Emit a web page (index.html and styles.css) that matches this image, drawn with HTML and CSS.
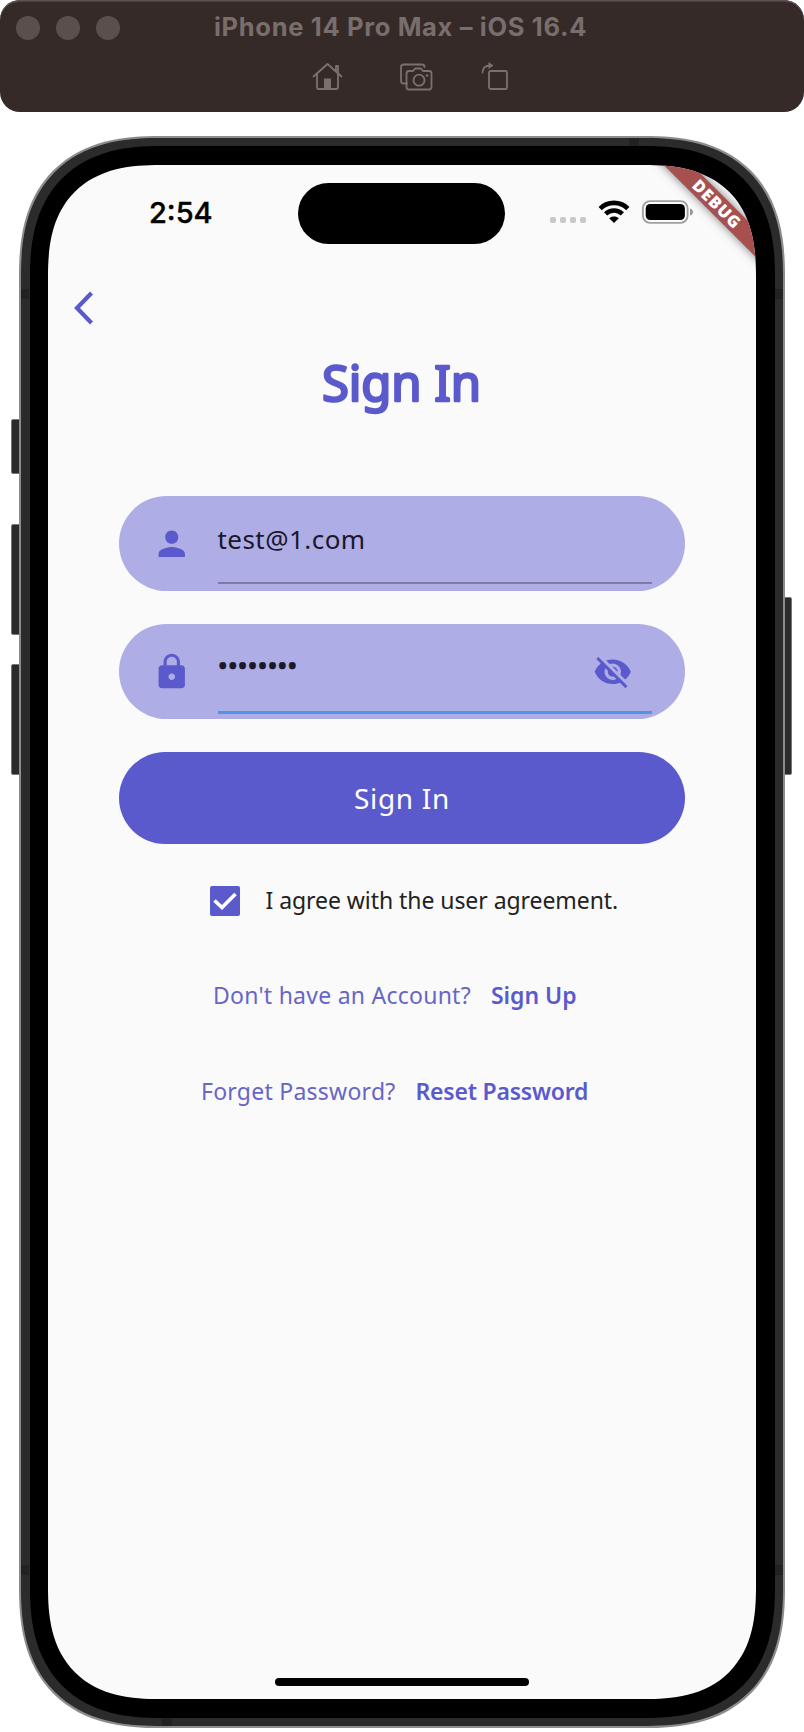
FILE: index.html
```html
<!DOCTYPE html>
<html lang="en">
<head>
<meta charset="utf-8">
<title>Sign In</title>
<link rel="stylesheet" href="styles.css">
</head>
<body>
<header class="titlebar">
  <div class="title-row">
    <div class="lights"><span class="light"></span><span class="light"></span><span class="light"></span></div>
    <div class="device-name"><span>iPhone 14 Pro Max – iOS 16.4</span></div>
  </div>
  <div class="tools">
    <svg class="tool" width="32" height="30" viewBox="0 0 32 30">
      <path d="M1.5 14.5 15.5 2 29.5 14.5M5 12V25q0 2 2 2H24q2 0 2-2V12M24 9V4h2v7"/>
      <path class="solid" d="M12 16.500h7V27h-7z"/>
    </svg>
    <svg class="tool" width="34" height="30" viewBox="0 0 34 30">
      <path d="M7 21.500H3.500q-2.500 0-2.500-2.500V5q0-2.500 2.500-2.500H22q2.500 0 2.500 2.500"/>
      <path d="M9 9h4l2-2.500h6L23 9h6q2.500 0 2.500 2.500V25q0 2.500-2.500 2.500H9Q6.500 27.500 6.500 25V11.500Q6.500 9 9 9Z"/>
      <circle cx="19" cy="18.200" r="5.500"/><circle class="solid" cx="27" cy="13.500" r="1.300"/>
    </svg>
    <svg class="tool" width="28" height="30" viewBox="0 0 28 30">
      <rect x="8" y="9" width="18" height="18" rx="2"/>
      <path d="M1.500 10.500C1.500 6 4 3.500 9.500 3.500"/><path class="solid" d="M7.500 0 12.500 3.500 7.500 7z"/>
    </svg>
  </div>
</header>

<main class="device">
  <i class="key key-mute"></i><i class="key key-up"></i><i class="key key-down"></i><i class="key key-power"></i>
  <div class="frame">
    <i class="band band-top"></i><i class="band band-left"></i><i class="band band-right"></i>
    <i class="band band-left low"></i><i class="band band-right low"></i><i class="band band-bottom"></i>
    <div class="bezel">
      <div class="screen">
        <div class="status">
          <span class="time">2:54</span>
          <span class="island"></span>
          <div class="indicators">
            <span class="cell"><i></i><i></i><i></i><i></i></span>
            <svg class="wifi" width="32" height="24" viewBox="0 0 32 24">
              <path d="M2.200 8.600C9.800 1 22.200 1 29.800 8.600M7.600 13.900C12.400 9.300 19.600 9.300 24.400 13.900"/>
              <path class="wedge" d="M16 23 11.200 18.300C13.800 15.900 18.200 15.900 20.800 18.300Z"/>
            </svg>
            <svg class="battery" width="52" height="24" viewBox="0 0 52 24">
              <rect class="shell" x=".9" y="1.200" width="44.700" height="21.600" rx="7"/>
              <rect x="3.700" y="4" width="39.200" height="16" rx="4.500"/>
              <path class="nub" d="M48 8.500Q51 9.500 51 12T48 15.500Z"/>
            </svg>
          </div>
          <div class="ribbon"><span>DEBUG</span></div>
        </div>

        <svg class="back" width="20" height="34" viewBox="0 0 20 34"><path d="M17.500 2 3 17 17.500 32"/></svg>

        <h1 class="heading"><svg width="180" height="80" viewBox="0 0 180 80"><text x="11" y="53" textLength="159">Sign In</text></svg></h1>

        <form class="form">
          <div class="field">
            <svg class="icon" viewBox="0 0 24 24"><path d="M12 12c2.210 0 4-1.790 4-4s-1.790-4-4-4-4 1.790-4 4 1.790 4 4 4zm0 2c-2.670 0-8 1.340-8 4v2h16v-2c0-2.660-5.330-4-8-4z"/></svg>
            <div class="entry"><span class="email">test@1.com</span></div>
          </div>
          <div class="field">
            <svg class="icon" viewBox="0 0 24 24"><path d="M18 8h-1V6c0-2.760-2.240-5-5-5S7 3.240 7 6v2H6c-1.100 0-2 .9-2 2v10c0 1.100.9 2 2 2h12c1.100 0 2-.9 2-2V10c0-1.100-.9-2-2-2zm-6 9c-1.100 0-2-.9-2-2s.9-2 2-2 2 .9 2 2-.9 2-2 2zm3.100-9H8.900V6c0-1.710 1.390-3.100 3.100-3.100 1.710 0 3.100 1.390 3.100 3.100v2z"/></svg>
            <div class="entry focused">
              <span class="dots">••••••••</span>
              <svg class="icon" viewBox="0 0 24 24"><path d="M12 7c2.760 0 5 2.240 5 5 0 .65-.13 1.260-.36 1.830l2.920 2.920c1.510-1.260 2.700-2.890 3.430-4.750-1.730-4.390-6-7.500-11-7.500-1.400 0-2.740.25-3.980.7l2.160 2.160C10.740 7.130 11.350 7 12 7zM2 4.270l2.280 2.280.46.46C3.080 8.300 1.780 10.020 1 12c1.730 4.390 6 7.500 11 7.500 1.550 0 3.030-.3 4.380-.84l.42.42L19.730 22 21 20.730 3.270 3 2 4.270zM7.530 9.800l1.550 1.550c-.05.21-.08.43-.08.65 0 1.660 1.340 3 3 3 .22 0 .44-.03.65-.08l1.550 1.550c-.67.33-1.410.53-2.200.53-2.760 0-5-2.240-5-5 0-.79.2-1.530.53-2.200zm4.310-.78l3.150 3.150.02-.16c0-1.660-1.340-3-3-3l-.17.01z"/></svg>
            </div>
          </div>
          <button class="submit" type="button"><span>Sign In</span></button>
        </form>

        <div class="agree">
          <svg class="check" width="30" height="30" viewBox="0 0 30 30"><rect width="30" height="30" rx="2"/><path d="M4.500 14.500 12 21.500 25.500 8"/></svg>
          <span class="agree-text">I agree with the user agreement.</span>
        </div>
        <div class="line signup"><span class="ask">Don't have an Account?</span><a class="action">Sign Up</a></div>
        <div class="line reset"><span class="ask">Forget Password?</span><a class="action">Reset Password</a></div>
        <i class="home-bar"></i>
      </div>
    </div>
  </div>
</main>
</body>
</html>
```
FILE: styles.css
```css
* { box-sizing: border-box; }
body {
  margin: 0;
  width: 804px;
  height: 1732px;
  overflow: hidden;
  background: #fff;
  font-family: "Noto Sans", sans-serif;
}
svg { display: block; flex: none; }
span, a { white-space: nowrap; }

/* Simulator title bar */
.titlebar {
  height: 112px;
  border-radius: 20px;
  background: #362a28;
  box-shadow: inset 0 1.5px 0 #5d5351;
}
.title-row { display: flex; height: 56px; padding-left: 16px; align-items: center; }
.lights { display: flex; gap: 16px; width: 198px; }
.light { width: 24px; height: 24px; border-radius: 50%; background: #5a4f4d; }
.device-name {
  font: 700 25.5px/32px Inter, sans-serif;
  letter-spacing: .67px;
  color: #786e6c;
  margin-top: -3px;
}
.tools { display: flex; padding: 5.500px 0 0 312px; }
.tool { fill: none; stroke: #7a706e; stroke-width: 1.8; stroke-linecap: round; stroke-linejoin: round; }
.tool .solid { fill: #7a706e; stroke: none; }
.tool:nth-child(1) { margin-right: 56px; }
.tool:nth-child(2) { margin-right: 47px; }

/* Phone body */
.device { position: relative; padding: 23.500px 19px 0; }
.key { position: absolute; width: 10px; background: #2b2b2b; border: 1px solid #777; border-radius: 2px; }
.key-mute { left: 11px; top: 306.500px; height: 55px; }
.key-up { left: 11px; top: 412px; height: 111px; }
.key-down { left: 11px; top: 552px; height: 111px; }
.key-power { right: 12px; top: 485px; height: 178px; }
.frame {
  position: relative;
  width: 766px;
  height: 1592px;
  padding: 8.500px 8.500px;
  background: #2b2b2b;
  border: 2px solid #8c8c8c;
  border-radius: 118px;
}
.bezel { height: 1572px; padding: 19px 18.500px; background: #000; border-radius: 110px; }
.screen {
  position: relative;
  display: flex;
  flex-direction: column;
  width: 708px;
  height: 1534px;
  overflow: hidden;
  background: #fafafa;
  border-radius: 93px;
}
@supports (corner-shape: superellipse(1.3)) {
  .frame { border-radius: 140px; corner-shape: superellipse(1.3); }
  .bezel { border-radius: 130px; corner-shape: superellipse(1.28); }
  .screen { border-radius: 112px; corner-shape: superellipse(1.337); }
}
.band { position: absolute; background: #222; }
.band-top, .band-bottom { width: 10px; height: 8px; }
.band-top { left: 608px; top: 0; }
.band-bottom { left: 141px; bottom: 0; }
.band-left, .band-right { width: 8px; height: 10px; top: 151px; }
.band-left { left: 0; }
.band-right { right: 0; }
.band.low { top: 1427px; }

/* Status bar */
.status { display: flex; height: 127px; padding: 18px 0 0 101px; }
.time { width: 149px; font: 500 29px/60px Inter, sans-serif; color: #000; -webkit-text-stroke: .4px #000; }
.island { width: 207px; height: 61px; border-radius: 31px; background: #000; }
.indicators { display: flex; height: 24px; margin: 17px 0 0 45px; }
.cell { display: flex; gap: 4px; width: 48px; padding-top: 17px; }
.cell i { width: 6px; height: 6px; border-radius: 2px; background: #c8c8c8; }
.wifi { fill: none; stroke: #000; stroke-width: 4.600; margin-right: 12px; }
.wifi .wedge { fill: #000; stroke: none; }
.battery .shell { fill: none; stroke: #a0a0a0; stroke-width: 1.800; }
.battery .nub { fill: #999; }
.ribbon {
  position: absolute;
  left: 587.500px;
  top: 27.500px;
  width: 160px;
  height: 19.500px;
  padding-left: 3px;
  background: #a75050;
  box-shadow: 0 0 10px rgba(0, 0, 0, .5);
  transform: rotate(45deg);
  color: #fff;
  text-align: center;
  font: 800 16.500px/19.500px "Open Sans", sans-serif;
  letter-spacing: .9px;
}

.back { margin: -1px 0 0 26px; fill: none; stroke: #5b5acc; stroke-width: 4.200; }
.heading { display: flex; justify-content: center; margin: 23px 0 0 -2px; height: 148px; }
.heading text {
  font: 400 49px "Noto Sans", sans-serif;
  fill: #5b5acc;
  stroke: #5b5acc;
  stroke-width: 2.500px;
  stroke-linejoin: round;
}

/* Form */
.form { display: flex; flex-direction: column; gap: 33px; padding: 0 71px; }
.field {
  display: flex;
  height: 95px;
  padding-left: 32.500px;
  background: #aeade5;
  border-radius: 48px;
}
.icon { width: 39.500px; height: 39.500px; margin-top: 28px; fill: #5b5acc; }
.entry {
  display: flex;
  justify-content: space-between;
  width: 434px;
  height: 88px;
  margin-left: 26.500px;
  padding-right: 19px;
  border-bottom: 2px solid #7d7aa5;
}
.entry.focused { height: 89.500px; border-bottom: 3px solid #5096e4; }
.email { font-size: 26px; line-height: 36px; margin: 25px 0 0; color: #1a1829; letter-spacing: .45px; }
.dots { font-size: 28px; line-height: 36px; margin: 23px 0 0; color: #1a1829; letter-spacing: -.6px; -webkit-text-stroke: .6px #1a1829; }
.submit {
  height: 92px;
  border: 0;
  border-radius: 48px;
  background: #5b5acc;
  color: #fff;
  font: 400 28px/40px "Noto Sans", sans-serif;
  letter-spacing: .7px;
}

.agree { display: flex; align-items: center; height: 30px; margin: 41.500px 0 0 162px; }
.check { fill: #5b5acc; }
.check path { fill: none; stroke: #fff; stroke-width: 3.600; }
.agree-text { margin: -2px 0 0 25.500px; font-size: 23px; letter-spacing: -.06px; color: #222; }
.line { display: flex; font-size: 23px; line-height: 32px; color: #6766c6; letter-spacing: .25px; }
.signup { margin: 63.500px 0 0 165px; }
.reset { margin: 63.500px 0 0 153px; }
.action { margin-left: 20px; font-weight: 600; color: #5b5acc; letter-spacing: 0; }
.reset .action { letter-spacing: -.22px; }
.home-bar { position: absolute; left: 227px; top: 1512.500px; width: 254px; height: 8.500px; border-radius: 5px; background: #000; }
```
